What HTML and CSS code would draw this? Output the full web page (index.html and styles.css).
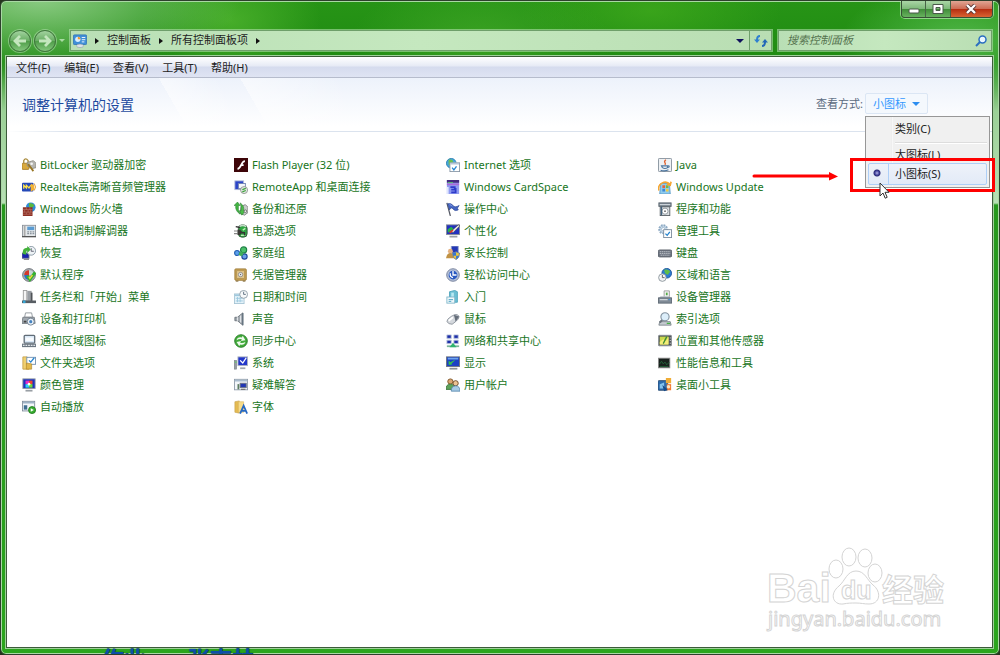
FILE: index.html
```html
<!DOCTYPE html>
<html lang="zh-CN">
<head>
    <meta charset="UTF-8">
    <meta name="viewport" content="width=device-width, initial-scale=1.0">
    <title>所有控制面板项</title>
    <link rel="stylesheet" href="styles.css">
</head>
<body>
    <div class="window">
        <!-- 标题栏 -->
        <header class="chrome">
            <div class="window-buttons">
                <button class="win-btn" type="button" aria-label="最小化">
                    <svg width="12" height="10" viewBox="0 0 12 10"><rect x="1" y="5" width="10" height="4" rx="1" fill="#fff" stroke="#4a5a4a"/></svg>
                </button>
                <button class="win-btn" type="button" aria-label="最大化">
                    <svg width="12" height="10" viewBox="0 0 12 10"><path d="M1 .5h10v9H1zM4 3.5h4v3H4z" fill="#fff" fill-rule="evenodd" stroke="#4a5a4a"/></svg>
                </button>
                <button class="win-btn win-close" type="button" aria-label="关闭">
                    <svg width="12" height="10" viewBox="0 0 12 10"><path d="M2 1l8 8M10 1L2 9" stroke="#533" stroke-width="4"/><path d="M2 1l8 8M10 1L2 9" stroke="#fff" stroke-width="2.4"/></svg>
                </button>
            </div>
            <div class="nav-row">
                <div class="nav-buttons">
                    <button class="nav-btn" type="button" aria-label="后退">
                        <svg width="14" height="14" viewBox="0 0 14 14"><path d="M7 2L2 7l5 5M2.5 7H13" fill="none" stroke="#c4e6be" stroke-width="2.8"/></svg>
                    </button>
                    <button class="nav-btn" type="button" aria-label="前进">
                        <svg width="14" height="14" viewBox="0 0 14 14"><path d="M7 2l5 5-5 5M11.5 7H1" fill="none" stroke="#c4e6be" stroke-width="2.8"/></svg>
                    </button>
                    <span class="nav-arrow"></span>
                </div>
                <div class="address">
                    <svg class="icon" viewBox="0 0 16 16"><rect x=".5" y="1" width="15" height="11" rx="1" fill="#3f8fd8" stroke="#3577b8"/><circle cx="5.5" cy="6" r="3" fill="#d9edff"/><path d="M5.5 6V3a3 3 0 0 1 3 3z" fill="#f39a2a"/><path d="M10 4h4M10 6.5h4M10 9h3" stroke="#fff"/><ellipse cx="8" cy="13.5" rx="4" ry="2" fill="#dde3ea" stroke="#8796a5" stroke-width=".6"/></svg>
                    <span class="crumb-arrow"></span>
                    <a href="#">控制面板</a>
                    <span class="crumb-arrow"></span>
                    <a href="#">所有控制面板项</a>
                    <span class="crumb-arrow"></span>
                    <button class="address-drop" type="button" aria-label="历史记录"></button>
                    <button class="refresh" type="button" aria-label="刷新">
                        <svg width="14" height="12" viewBox="0 0 14 12"><path d="M6 1Q3 1 3 5" fill="none" stroke="#2f7fd0" stroke-width="2"/><path d="M0 4.5h6L3 8z" fill="#2f7fd0"/><path d="M8 11q3 0 3-4" fill="none" stroke="#2468b8" stroke-width="2"/><path d="M8 7.5h6L11 4z" fill="#2468b8"/></svg>
                    </button>
                </div>
                <div class="search">
                    <input type="text" placeholder="搜索控制面板" aria-label="搜索控制面板">
                    <svg width="12" height="12" viewBox="0 0 12 12"><circle cx="7.5" cy="4.5" r="3.5" fill="#e9f7ff" stroke="#2a6fc0" stroke-width="1.5"/><path d="M5 7L1 11" stroke="#2a6fc0" stroke-width="2"/></svg>
                </div>
            </div>
        </header>

        <div class="client">
            <nav class="menubar">
                <button type="button">文件(F)</button>
                <button type="button">编辑(E)</button>
                <button type="button">查看(V)</button>
                <button type="button">工具(T)</button>
                <button type="button">帮助(H)</button>
            </nav>

            <div class="heading">
                <h1>调整计算机的设置</h1>
                <span class="view-label" id="viewLabel">查看方式:</span>
                <div class="view">
                    <button class="view-btn" type="button" aria-describedby="viewLabel">小图标</button>
                    <div class="popup" role="menu">
                        <button type="button" role="menuitemradio" aria-checked="false">类别(C)</button>
                        <hr>
                        <button class="covered" type="button" role="menuitemradio" aria-checked="false">大图标(L)</button>
                        <button class="selected" type="button" role="menuitemradio" aria-checked="true">小图标(S)</button>
                    </div>
                    <svg class="mark-arrow" width="88" height="10" viewBox="0 0 88 10"><path d="M2 4h77" stroke="#f00" stroke-width="3" stroke-linecap="round"/><path d="M77 0l9 4.5-9 4z" fill="#f00"/></svg>
                    <div class="mark-box"></div>
                    <svg class="cursor" width="11" height="18" viewBox="0 0 11 18"><path d="M1 1v13l3-3 2.2 5.2 2-.9L6 10.300h4z" fill="#fff" stroke="#333"/></svg>
                </div>
            </div>

            <ul class="items">
                <li><a href="#"><svg class="icon" viewBox="0 0 16 16"><path d="M2 6V3q2-4 5 0v3" fill="none" stroke="#a98a3a" stroke-width="1.5"/><rect x="0" y="6" width="8" height="7" rx="1" fill="#d9a93d" stroke="#a57d2c"/><path d="M6 5l7-2 3 3v5l-4 1-6-3z" fill="#b5b5b0" stroke="#8d8a82"/><path d="M7 7l6 8" stroke="#977522" stroke-width="2"/><circle cx="11" cy="6.5" r="1.5" fill="#f5f5f5"/></svg>BitLocker 驱动器加密</a></li>
                <li><a href="#"><svg class="icon" viewBox="0 0 16 16"><rect width="16" height="16" fill="#3d0508"/><path d="M12.5 3.5C8 3.5 8.5 12 4 12.5M7.5 8H11" fill="none" stroke="#fff" stroke-width="2"/></svg>Flash Player (32 位)</a></li>
                <li><a href="#"><svg class="icon" viewBox="0 0 16 16"><circle cx="6" cy="6" r="5.5" fill="#46a6dc" stroke="#2a7fb0"/><path d="M3 2q5-1 5 2T3 8z" fill="#6cc04c"/><rect x="4.5" y="5.5" width="11" height="10" fill="#fff" stroke="#8796a5"/><path d="M5 6.5h10" stroke="#b7c6d8" stroke-width="2"/><path d="M7 11l2 2.5 3-4" fill="none" stroke="#2684cf" stroke-width="1.5"/></svg>Internet 选项</a></li>
                <li><a href="#"><svg class="icon" viewBox="0 0 16 16"><rect x=".5" y=".5" width="15" height="15" rx="1" fill="#eef1f4" stroke="#7b8794"/><path d="M9 2c-4 3 1 3-1 6" fill="none" stroke="#e2602c" stroke-width="1.5"/><path d="M4 9h7v2q-3 2-6 0zM3 14q5 1.5 9-.5M11 9q3-.5 1 2" fill="none" stroke="#4c76a0" stroke-width="1.3"/></svg>Java</a></li>

                <li><a href="#"><svg class="icon" viewBox="0 0 16 16"><rect y="3" width="13" height="10" rx="1" fill="#2549b8"/><path d="M2 10V6l3 3V6l3 3 2-3" fill="none" stroke="#ffe34a" stroke-width="1.5"/><path d="M10 4l4 2v5l-4 2z" fill="#f2b236"/><path d="M14 4q3 4 0 8" fill="none" stroke="#db9424"/></svg>Realtek高清晰音频管理器</a></li>
                <li><a href="#"><svg class="icon" viewBox="0 0 16 16"><rect x="1" y="1" width="10" height="10" fill="#2b45c8" stroke="#b5bdd8"/><rect x="5" y="4" width="8" height="6" fill="#f4f6fb" stroke="#6d7fae"/><circle cx="11.5" cy="11.5" r="4" fill="#e8ece8" stroke="#8a918a"/><path d="M9.5 11l4-1.5M13.5 12l-4 1.5" stroke="#3ba13b" stroke-width="1.4"/></svg>RemoteApp 和桌面连接</a></li>
                <li><a href="#"><svg class="icon" viewBox="0 0 16 16"><rect x="1" y="0" width="14" height="16" fill="#8f9bf0"/><path d="M1 0h14v3H1z" fill="#43297f"/><path d="M1 4h14v2H1z" fill="#a96bd8"/><path d="M2 3h6" stroke="#5ed06a"/><path d="M5 8h5v3h-4M6 14h5V9" fill="none" stroke="#2e3aca" stroke-width="2"/><path d="M1 8h2v8H1z" fill="#dfe5ff"/></svg>Windows CardSpace</a></li>
                <li><a href="#"><svg class="icon" viewBox="0 0 16 16"><path d="M3 4h10l1 12H2z" fill="#8ecbee" stroke="#5a9cc8"/><path d="M5 6h3v3H5z" fill="#e8633a"/><path d="M9 6h3v3H9z" fill="#72b944"/><path d="M5 10h3v3H5z" fill="#3f86d0"/><path d="M9 10h3v3H9z" fill="#f4ca3f"/><path d="M1 12C-1 5 8-1 14 5l1-3M15 2l-1 4-4-1" fill="none" stroke="#f4a632" stroke-width="1.8"/></svg>Windows Update</a></li>

                <li><a href="#"><svg class="icon" viewBox="0 0 16 16"><circle cx="10" cy="6" r="5.5" fill="#2f8bd8"/><path d="M8 1q5 0 6 3l-3 3-3-2z" fill="#5bb83f"/><path d="M1 6h11v10H1z" fill="#8e2f24"/><path d="M1 8.5h11M1 11.5h11M1 14h11M5 6v3M9 6v3M3 9v3M7 9v3M10 9v3M5 12v2M9 12v2" stroke="#c08578" stroke-width=".6"/></svg>Windows 防火墙</a></li>
                <li><a href="#"><svg class="icon" viewBox="0 0 16 16"><path d="M8 5l5-2 3 3v6l-4 3-5-2z" fill="#c9cccb" stroke="#7b7f7e"/><path d="M0 4l4-4 3 4H5q-1 5 2 10Q1 10 2 4z" fill="#43b543" stroke="#1e7a28" stroke-width=".6"/><path d="M7 1q5 3 4 9h2l-4 5-3-5h2q1-4-1-9z" fill="#4dbd4a" stroke="#1e7a28" stroke-width=".6"/><circle cx="13" cy="10.5" r="1.5" fill="#eee" stroke="#666"/></svg>备份和还原</a></li>
                <li><a href="#"><svg class="icon" viewBox="0 0 16 16"><path d="M1 1l4 15" stroke="#565a66" stroke-width="1.4"/><path d="M2 2q4-1 6 2t7 0l-2 3 1 2q-4 2-6-1T4 9z" fill="#4566c4" stroke="#2f4996" stroke-width=".8"/><path d="M4 3q2 0 3 2" stroke="#8aa3ea" fill="none"/></svg>操作中心</a></li>
                <li><a href="#"><svg class="icon" viewBox="0 0 16 16"><rect x="1" y="1" width="14" height="4" fill="#7a858f" stroke="#59646f"/><path d="M2 3h12" stroke="#e5ebf0"/><rect x="2.5" y="5.5" width="11" height="10" fill="#dbe0e3" stroke="#555c62"/><circle cx="8" cy="10.5" r="3.5" fill="#fff" stroke="#8b9399"/><circle cx="8" cy="10.5" r="1" fill="#666"/><path d="M4 5v10" stroke="#41627e" stroke-width="1.5"/></svg>程序和功能</a></li>

                <li><a href="#"><svg class="icon" viewBox="0 0 16 16"><rect x=".5" y="1.5" width="15" height="13" fill="#e4e8eb" stroke="#8a9199"/><path d="M3 2v12" stroke="#aaa" stroke-width="2"/><rect x="6" y="3" width="8" height="4" fill="#5a9bd2"/><path d="M6 9h2M9 9h2M12 9h2M6 11h2M9 11h2M12 11h2" stroke="#8a949e" stroke-width="1.2"/><path d="M0 14.5h16" stroke="#555" stroke-width="1.5"/></svg>电话和调制解调器</a></li>
                <li><a href="#"><svg class="icon" viewBox="0 0 16 16"><rect x="5" y="1" width="10" height="14" rx="4" fill="#30a543" stroke="#34523a"/><path d="M6 3q4-3 8 0" stroke="#c4dcc8" stroke-width="2" fill="none"/><path d="M10 7l3-2M8 13h5" stroke="#bdf0b8" stroke-width="1.5"/><path d="M0 8h4M0 11h4" stroke="#888" stroke-width="1.3"/><path d="M4 6.5h3l3 3-3 3H4z" fill="#3a3a36"/><path d="M9 10h3v3M2 3l5 1" fill="none" stroke="#333" stroke-width="1.5"/></svg>电源选项</a></li>
                <li><a href="#"><svg class="icon" viewBox="0 0 16 16"><rect x=".5" y="1" width="15" height="11" fill="#2231c0" stroke="#858c95"/><path d="M2 10V6l4-3 3 3z" fill="#25b44c"/><path d="M5 9l9-8 2 1-8 8z" fill="#e9e9e9" stroke="#333" stroke-width=".6"/><path d="M4 10l4-3" stroke="#d93c2a" stroke-width="2"/><path d="M4 14.5h9" stroke="#9aa0a6" stroke-width="2"/></svg>个性化</a></li>
                <li><a href="#"><svg class="icon" viewBox="0 0 16 16"><circle cx="6" cy="6" r="4.5" fill="#cfdfed" stroke="#8fabc4" stroke-width="2.4" stroke-dasharray="2 1"/><circle cx="6" cy="6" r="2" fill="#fff" stroke="#9cb6cc"/><rect x="6.5" y="6.5" width="9" height="9" fill="#fff" stroke="#79899b"/><path d="M8.5 11l2 2 3-4" fill="none" stroke="#2684cf" stroke-width="1.5"/></svg>管理工具</a></li>

                <li><a href="#"><svg class="icon" viewBox="0 0 16 16"><rect x="0" y="8" width="8" height="6" fill="#1822b0" stroke="#6a7280"/><path d="M2 15.5h6" stroke="#777"/><circle cx="10.5" cy="5.5" r="5" fill="#eef3f6" stroke="#8493a0"/><path d="M10.5 2.5v3.5h3" stroke="#556" fill="none"/><path d="M1 9Q0 2 6 2V0l4 4-4 4V5Q4 5 5 10z" fill="#43b13b"/></svg>恢复</a></li>
                <li><a href="#"><svg class="icon" viewBox="0 0 16 16"><circle cx="3.5" cy="8" r="2.8" fill="#5a9fec" stroke="#235eb0" stroke-width="1.3"/><circle cx="12" cy="12" r="3" fill="#6a9fe8" stroke="#1f479b" stroke-width="1.3"/><circle cx="11" cy="4.5" r="3.5" fill="#4cc06a" stroke="#1e8246" stroke-width="1.3"/><circle cx="8" cy="9" r="2.5" fill="#40ad5a"/></svg>家庭组</a></li>
                <li><a href="#"><svg class="icon" viewBox="0 0 16 16"><rect x="6" y="0" width="8" height="8" fill="#2438b5" stroke="#9ba9cc"/><circle cx="5" cy="6" r="2.8" fill="#e5b283"/><path d="M0 14q1-6 5-6t5 6z" fill="#c19245"/><path d="M11.5 6.5q2 1.5 4 1.5 0 6-4 7.5-4-1.5-4-7.5 2 0 4-1.5z" fill="#f0c83b" stroke="#5c79ad"/><path d="M11.5 7v4H8V8zM11.5 11H15q-1 3-3.5 4z" fill="#3a78cf"/></svg>家长控制</a></li>
                <li><a href="#"><svg class="icon" viewBox="0 0 16 16"><rect x="0" y="4.5" width="16" height="8" rx="2" fill="#6d7480" stroke="#5b626c"/><path d="M2 6.5h12M2 8.5h12M3 10.5h10" stroke="#c5c9cf" stroke-dasharray="1.5 .7"/></svg>键盘</a></li>

                <li><a href="#"><svg class="icon" viewBox="0 0 16 16"><circle cx="8" cy="8" r="7.3" fill="#a9afb4" stroke="#686e74"/><path d="M8 8V2.5A5.5 5.5 0 0 0 2.5 8z" fill="#d5382a"/><path d="M8 8H2.5A5.5 5.5 0 0 0 8 13.5z" fill="#2d69c8"/><path d="M8 8V2.5A5.5 5.5 0 0 1 13.5 8z" fill="#c8d5d8"/><path d="M6 9l3 4 6-8" fill="none" stroke="#34b22f" stroke-width="3.5"/><path d="M8 10l1 2 3-4" fill="none" stroke="#f1d83d" stroke-width="1.5"/></svg>默认程序</a></li>
                <li><a href="#"><svg class="icon" viewBox="0 0 16 16"><rect x="1" y="1" width="13" height="13" rx="1" fill="#c8a355" stroke="#9c7832"/><rect x="3" y="3" width="9" height="9" fill="#dec48a" stroke="#b59655"/><circle cx="7.5" cy="7.5" r="2.5" fill="#eee" stroke="#8c8c8c"/><circle cx="7.5" cy="7.5" r=".8" fill="#666"/><path d="M2 15h3M10 15h3" stroke="#725621"/></svg>凭据管理器</a></li>
                <li><a href="#"><svg class="icon" viewBox="0 0 16 16"><circle cx="8" cy="8" r="7.2" fill="#b4c0d8" stroke="#727e98"/><circle cx="8" cy="8" r="5" fill="#2858c0"/><path d="M8 3.5V8h4M5 6q-1 4 3 5" fill="none" stroke="#fff" stroke-width="1.5"/></svg>轻松访问中心</a></li>
                <li><a href="#"><svg class="icon" viewBox="0 0 16 16"><circle cx="10" cy="6" r="5.5" fill="#2c7bd2" stroke="#1b559a"/><path d="M7 2q5-1 7 2l-3 4-3-2z" fill="#61bd47"/><circle cx="5" cy="11" r="4.3" fill="#f2f4f5" stroke="#8a939a"/><path d="M5 8v3h2.5" fill="none" stroke="#555"/></svg>区域和语言</a></li>

                <li><a href="#"><svg class="icon" viewBox="0 0 16 16"><rect x="1.5" y=".5" width="4" height="12" fill="#f4f4f4" stroke="#999"/><rect x="6" y="1" width="5" height="12" fill="#9a9fa4"/><path d="M11 3v10" stroke="#4f5357" stroke-width="2"/><path d="M0 13.5h16" stroke="#575d63" stroke-width="3"/><path d="M1 12h3v3H1z" fill="#36a5d4"/></svg>任务栏和「开始」菜单</a></li>
                <li><a href="#"><svg class="icon" viewBox="0 0 16 16"><rect x=".5" y="4.5" width="11" height="11" fill="#e5f3fa" stroke="#a5c4d4"/><path d="M1 6h9" stroke="#9fc8dd" stroke-width="2"/><path d="M2 9.5h8M2 12.5h8M4 8v6M7 8v6" stroke="#9bc8de"/><circle cx="11" cy="5" r="4.5" fill="#f7f9fa" stroke="#8b9aa5"/><path d="M11 2v3h2.5" fill="none" stroke="#567"/></svg>日期和时间</a></li>
                <li><a href="#"><svg class="icon" viewBox="0 0 16 16"><path d="M4 2l6-1.5 3 1.5v12H4z" fill="#6cbfd4" stroke="#4ea5bd"/><path d="M6 3h3v6H6z" fill="#b7e8f2"/><rect x="1" y="8" width="9" height="7" fill="#eff8fb" stroke="#7fb5c8"/><path d="M3 11h5M3 13h3" stroke="#3f9bc0"/></svg>入门</a></li>
                <li><a href="#"><svg class="icon" viewBox="0 0 16 16"><path d="M7 1h6v8H7z" fill="#f2f2f2" stroke="#999"/><path d="M9 3h2v3H9z" fill="#53aa45"/><path d="M3 7h10l3 3H0z" fill="#b8c0c8"/><rect x=".5" y="9" width="15" height="6" fill="#808b96" stroke="#5e6974"/><path d="M2 11h9" stroke="#cfd4d9" stroke-width="1.5"/><path d="M12 11h2" stroke="#39e"/></svg>设备管理器</a></li>

                <li><a href="#"><svg class="icon" viewBox="0 0 16 16"><path d="M4 1h7l1 5H3z" fill="#fff" stroke="#8b9299"/><path d="M1 6h13l1 7H0z" fill="#a2a9b0" stroke="#737a81"/><circle cx="10" cy="11" r="4" fill="#ebf2f8" stroke="#6e7e8e"/><circle cx="10" cy="11" r="1.8" fill="#4683c0"/><path d="M2 11h3" stroke="#444" stroke-width="2"/></svg>设备和打印机</a></li>
                <li><a href="#"><svg class="icon" viewBox="0 0 16 16"><path d="M1 6h3l6-5v14l-6-5H1z" fill="#9aa1a8" stroke="#6b737b"/><path d="M4 6v4M7.5 4v8" stroke="#dfe3e7" stroke-width="1.5"/><path d="M10 1v14" stroke="#657380" stroke-width="1.5"/></svg>声音</a></li>
                <li><a href="#"><svg class="icon" viewBox="0 0 16 16"><path d="M1 11q0-3 5-6l4-2q3-1 5 2 0 3-4 6l-4 3q-4 0-6-3z" fill="#d4d8dd" stroke="#8a919a"/><path d="M9 3l6 2-4 6-1-4z" fill="#656e7a"/><path d="M3 10l5-4" stroke="#fff" stroke-width="2"/></svg>鼠标</a></li>
                <li><a href="#"><svg class="icon" viewBox="0 0 16 16"><path d="M2 11l-1 4h14l-1-4z" fill="#c5cbd0" stroke="#7a838b"/><path d="M10 13h4" stroke="#48b048" stroke-width="1.5"/><path d="M6 8l-4 4" stroke="#6b747c" stroke-width="2.5"/><circle cx="8" cy="5.5" r="4.7" fill="#dceefa" stroke="#8493a0" stroke-width="1.3"/></svg>索引选项</a></li>

                <li><a href="#"><svg class="icon" viewBox="0 0 16 16"><rect x="2.5" y="1.5" width="12" height="9" rx="1" fill="#d9e8f6" stroke="#626d78" stroke-width="1.5"/><path d="M4 4h9v4H4z" fill="#f8fbfe"/><rect x="0" y="11" width="16" height="4" fill="#6c7681"/><path d="M1 13h14" stroke="#e3e8ec" stroke-width="1.5" stroke-dasharray="2 1"/></svg>通知区域图标</a></li>
                <li><a href="#"><svg class="icon" viewBox="0 0 16 16"><circle cx="8" cy="8" r="7.2" fill="#43ab3c" stroke="#237a23"/><path d="M3 7q1-4 6-3l1-2 3 5-5 1 1-2Q6 5 3 7zM13 9q-1 4-6 3l-1 2-3-5 5-1-1 2q3 1 6-1z" fill="#f0faee"/></svg>同步中心</a></li>
                <li><a href="#"><svg class="icon" viewBox="0 0 16 16"><path d="M1 1h5v4H1zM9 1h5v4H9zM1 7h5v4H1zM9 7h5v4H9z" fill="#1d2fa8" stroke="#c2cbe0"/><path d="M1 14h14" stroke="#7ab598" stroke-width="2"/><path d="M4 15l4-5 4 5z" fill="#2eb36e"/></svg>网络和共享中心</a></li>
                <li><a href="#"><svg class="icon" viewBox="0 0 16 16"><rect x=".5" y="1.5" width="15" height="12" rx="1" fill="#50565c" stroke="#8b9196"/><rect x="2" y="3" width="10" height="9" fill="#c9d84c"/><path d="M2 9l4-3 3 2 3-5v9H2z" fill="#f3ed77"/><path d="M6 11l4-8" stroke="#3c8b32" stroke-width="1.5"/><path d="M14 4v1M14 7v1M14 10v1" stroke="#fff"/></svg>位置和其他传感器</a></li>

                <li><a href="#"><svg class="icon" viewBox="0 0 16 16"><path d="M1 1h5l2 2v12H1z" fill="#f0cf70" stroke="#c7a04a"/><rect x="5.5" y="1.5" width="10" height="8" fill="#fff" stroke="#6c8cae"/><path d="M8 5l2 2 4-5" fill="none" stroke="#2684cf" stroke-width="1.5"/><path d="M5 8l6 1v6H5z" fill="#e1b74b" stroke="#ac8224" stroke-width=".7"/></svg>文件夹选项</a></li>
                <li><a href="#"><svg class="icon" viewBox="0 0 16 16"><rect x="0" y="5" width="3" height="10" fill="#969da3" stroke="#7e858b" stroke-width=".7"/><path d="M1 7h2" stroke="#5d5"/><rect x="4.5" y="1" width="11" height="10" fill="#2337ca" stroke="#b1b8c0"/><path d="M7 5l3 3 4-6" fill="none" stroke="#fff" stroke-width="1.5"/><path d="M7 14h6" stroke="#9fa6ac" stroke-width="2"/></svg>系统</a></li>
                <li><a href="#"><svg class="icon" viewBox="0 0 16 16"><rect x=".5" y="1" width="15" height="11" fill="#1b41c4" stroke="#6d747c"/><path d="M2 3h12" stroke="#6fa5ef" stroke-width="2"/><path d="M3 10V5l2 2 6-3-5 5 1 1z" fill="#35c14c"/><path d="M4 14.5h9" stroke="#8b9298" stroke-width="2"/></svg>显示</a></li>
                <li><a href="#"><svg class="icon" viewBox="0 0 16 16"><rect x=".5" y="2.5" width="13" height="11" fill="#18201c" stroke="#888"/><path d="M2 9l2-3 2 3 2-2 2 3 3-3" fill="none" stroke="#23653a"/><path d="M2 12h10" stroke="#1f5c35"/></svg>性能信息和工具</a></li>

                <li><a href="#"><svg class="icon" viewBox="0 0 16 16"><rect x="1" y="1" width="14" height="11" fill="#1c32c0" stroke="#9198a0"/><path d="M4 3h4v4H4z" fill="#e62ec6"/><path d="M8 3h4v4H8z" fill="#f1462c"/><path d="M4 7h4v4H4z" fill="#2fd3f0"/><path d="M8 7h4v4H8z" fill="#6fdb36"/><circle cx="8" cy="7" r="1.5" fill="#fff"/><path d="M4 14.5h8" stroke="#999fa5" stroke-width="2"/></svg>颜色管理</a></li>
                <li><a href="#"><svg class="icon" viewBox="0 0 16 16"><rect x=".5" y="1.5" width="15" height="12" fill="#f3f6fa" stroke="#8d99a8"/><path d="M1 3h14" stroke="#a9bccf" stroke-width="2"/><rect x="7" y="6" width="7" height="5" fill="#2136b4" stroke="#6e7682"/><rect x="4" y="7" width="2" height="6" fill="#5d7d62"/><path d="M8 13h5" stroke="#777" stroke-width="1.5"/></svg>疑难解答</a></li>
                <li><a href="#"><svg class="icon" viewBox="0 0 16 16"><circle cx="5" cy="4" r="3" fill="#d9a672" stroke="#7a5020"/><path d="M0 13q0-6 5-6t5 6z" fill="#5ea35b" stroke="#39733a"/><circle cx="11" cy="6" r="3" fill="#ecc393" stroke="#684421"/><path d="M6 15q0-6 5-6t5 6z" fill="#a6cbe6" stroke="#5b8bb0"/></svg>用户帐户</a></li>
                <li><a href="#"><svg class="icon" viewBox="0 0 16 16"><rect x="0" y="3" width="11" height="11" rx="1" fill="#2d6cae" stroke="#27486e"/><path d="M2 12V7l5-2v7z" fill="#84c3ec"/><rect x="9" y="0" width="6" height="6" fill="#f0ad36"/><rect x="10" y="7" width="5" height="7" fill="#f27b32"/><circle cx="12" cy="10" r="2" fill="#fae4c2"/><path d="M5 8l6 5-4 2z" fill="#174c8a"/></svg>桌面小工具</a></li>

                <li><a href="#"><svg class="icon" viewBox="0 0 16 16"><rect x=".5" y="1.5" width="14" height="11" fill="#f3f6fa" stroke="#7d8b9a"/><path d="M1 3h13" stroke="#9fb3c6" stroke-width="2"/><path d="M2 6h4v5H2z" fill="#416f93"/><circle cx="11.5" cy="11.5" r="4" fill="#37ae30" stroke="#1f7a1d"/><path d="M10 9.5v4l3.5-2z" fill="#fff"/></svg>自动播放</a></li>
                <li><a href="#"><svg class="icon" viewBox="0 0 16 16"><path d="M1 2l5-1v14l-5-1z" fill="#e4bb52" stroke="#c7a04a" stroke-width=".7"/><path d="M5 2h6v12H5z" fill="#f7dc8a" stroke="#d9b560" stroke-width=".7"/><path d="M7 15.5l4-9 4 9M9 12.5h4.5" fill="none" stroke="#2769c4" stroke-width="2"/></svg>字体</a></li>
            </ul>

            <!-- 水印 -->
            <svg class="watermark" width="184" height="92" viewBox="0 0 184 92">
                <g>
                    <ellipse cx="72" cy="25" rx="7" ry="9"/>
                    <ellipse cx="85" cy="13" rx="7" ry="9"/>
                    <ellipse cx="101" cy="14" rx="7" ry="9"/>
                    <ellipse cx="111" cy="29" rx="7" ry="9"/>
                    <path d="M92 27c-9 0-11 10-17 15-10 8-6 19 4 18 5-1 8-1 13-1s8 1 13 1c11 0 13-12 4-19-6-5-8-14-17-14z"/>
                </g>
                <text class="wm-brand" x="3" y="58">Bai</text>
                <text class="wm-du" x="77" y="55">du</text>
                <text class="wm-cn" x="118" y="57">经验</text>
                <text class="wm-url" x="4" y="82">jingyan.baidu.com</text>
            </svg>
        </div>

        <div class="below"><span>作业</span><span>张志林</span></div>
    </div>
</body>
</html>
```
FILE: styles.css
```css
* {
    box-sizing: border-box;
}

body {
    margin: 0;
    font-family: "Noto Sans", "Noto Sans CJK SC", sans-serif;
    font-size: 11px;
    line-height: 16px;
    color: #222;
    background: #26331f;
}

button,
input {
    font: inherit;
    color: inherit;
    margin: 0;
    padding: 0;
    border: 0;
    background: none;
}

a {
    color: inherit;
    text-decoration: none;
}

/* 窗口边框 */
.window {
    position: relative;
    display: flex;
    flex-direction: column;
    min-height: 100vh;
    padding: 0 6px 6px 5px;
    overflow: hidden;
    border: 1px solid #2d402c;
    border-radius: 6px;
    box-shadow: inset 0 0 0 1px #a9d8a4;
    background:
        radial-gradient(ellipse 200px 70px at 40px 0, rgba(160, 215, 155, 0.8), transparent),
        radial-gradient(ellipse 90px 60px at 230px 20px, rgba(85, 185, 50, 0.7), transparent),
        radial-gradient(ellipse 130px 60px at 480px 40px, rgba(75, 175, 45, 0.6), transparent),
        radial-gradient(ellipse 130px 50px at 650px 10px, rgba(70, 175, 30, 0.6), transparent),
        radial-gradient(ellipse 120px 60px at 960px 40px, rgba(100, 200, 95, 0.7), transparent),
        linear-gradient(#279416 0, #1f8b12 60px, #9ad096 110px, #b8dfb5 202px, #26981d 204px, #2ba51d 100%);
}

.chrome {
    height: 55px;
}

.window-buttons {
    display: flex;
    width: 92px;
    height: 17px;
    margin-left: auto;
    border: 1px solid #365035;
    border-top: 0;
    border-radius: 0 0 4px 4px;
    overflow: hidden;
    box-shadow: 0 0 0 1px rgba(200, 240, 195, 0.6);
}

.win-btn {
    display: flex;
    flex: 24;
    align-items: center;
    justify-content: center;
    border-right: 1px solid #486447;
    background: linear-gradient(#aad5a6, #7cb878 50%, #3f8c38 50%, #68b25f);
}

.win-close {
    flex: 42;
    border-right: 0;
    background: linear-gradient(#e0a594, #cd6a52 50%, #b52c10 50%, #d96332);
}

.nav-row {
    display: flex;
    align-items: center;
    height: 21px;
    margin-top: 12px;
}

.nav-buttons {
    display: flex;
    align-items: center;
    gap: 3px;
    width: 64px;
    padding-left: 3px;
}

.nav-btn {
    display: flex;
    align-items: center;
    justify-content: center;
    flex: none;
    width: 22px;
    height: 22px;
    border: 1px solid #41733f;
    border-radius: 50%;
    background: linear-gradient(#a2d29f, #66ad61 50%, #4c9b46 50%, #84c77d);
    box-shadow: 0 0 0 1px rgba(190, 230, 185, 0.5);
}

.nav-arrow {
    border: 3px solid transparent;
    border-top-color: #a9dba3;
    border-bottom: 0;
}

.address,
.search {
    display: flex;
    align-items: center;
    height: 21px;
    border: 1px solid #6f9f6b;
    background: linear-gradient(90deg, #b9dfb5, #c5e8bf 50%, #b9deb3);
    box-shadow: 0 0 0 1px rgba(200, 235, 195, 0.5);
}

.address {
    flex: 1;
    padding-left: 2px;
}

.address a {
    padding-bottom: 1px;
}

.icon {
    flex: none;
    width: 14px;
    height: 14px;
}

.crumb-arrow {
    margin: 0 8px;
    border: 3px solid transparent;
    border-left: 4px solid #111;
    border-right: 0;
}

.address-drop {
    width: 18px;
    height: 19px;
    margin-left: auto;
}

.address-drop::after {
    content: "";
    display: block;
    width: 0;
    margin: 0 auto;
    border: 4px solid transparent;
    border-top-color: #10105c;
    border-bottom: 0;
}

.refresh {
    display: flex;
    align-items: center;
    justify-content: center;
    width: 22px;
    height: 19px;
    border-left: 1px solid #6f9f6b;
}

.search {
    width: 214px;
    margin: 0 1px 0 6px;
    padding: 0 4px 0 8px;
}

.search input {
    flex: 1;
    min-width: 0;
    padding-bottom: 1px;
    outline: 0;
}

.search input::placeholder {
    color: #55734f;
    font-style: italic;
}

/* 窗口内容 */
.client {
    position: relative;
    flex: 1;
    background: #fff;
    border: 1px solid #3c5c3a;
    box-shadow: 0 0 0 1px #9fd09a;
}

.menubar {
    display: flex;
    gap: 14px;
    height: 21px;
    padding: 2px 0 0 9px;
    background: linear-gradient(#fff, #e6eaf5 45%, #d5dbee 50%, #dfe4f3);
    border-bottom: 1px solid #b6bccc;
}

.heading {
    position: relative;
    display: flex;
    align-items: flex-start;
    height: 54px;
    padding: 15px 64px 0 15px;
    background:
        linear-gradient(60deg, transparent 18%, rgba(255, 255, 255, 0.5) 18%, transparent 24%, transparent 26%, rgba(255, 255, 255, 0.5) 26%, transparent 36%),
        linear-gradient(#edf2fb, #fff 90%);
}

.heading::after {
    content: "";
    position: absolute;
    left: 0;
    right: 0;
    bottom: 0;
    height: 1px;
    background: linear-gradient(90deg, #fff, #dbe3ee 60px);
}

h1 {
    flex: 1;
    margin: 2px 0 0;
    font-size: 14px;
    line-height: 20px;
    font-weight: normal;
    color: #1d4a9f;
}

.view-label {
    margin: 3px 2px 0 0;
    color: #5a6a80;
}

.view {
    position: relative;
    z-index: 1;
}

.view-btn {
    display: flex;
    align-items: center;
    justify-content: center;
    gap: 6px;
    width: 63px;
    height: 21px;
    color: #3399ff;
    background: #f4f8fd;
    border: 1px solid #dbe6f4;
    border-radius: 2px;
}

.view-btn::after {
    content: "";
    border: 4px solid transparent;
    border-top-color: #2b8df0;
    border-bottom: 0;
}

.popup {
    position: absolute;
    top: 23px;
    left: 0;
    width: 125px;
    padding: 2px;
    background: linear-gradient(90deg, #f1f1f1 25px, #ddd 25px, #fff 26px, #f0f0f0 27px);
    border: 1px solid #979797;
}

.popup button {
    display: block;
    width: 100%;
    height: 20px;
    padding-left: 27px;
    text-align: left;
    line-height: 18px;
}

.popup hr {
    height: 2px;
    margin: 3px 0 1px 27px;
    border: 0;
    border-top: 1px solid #ddd;
    background: #fff;
}

.popup .covered {
    height: 18px;
    line-height: 20px;
    overflow: hidden;
}

.popup .selected {
    position: relative;
    height: 22px;
    border: 1px solid #aecff7;
    border-radius: 2px;
    background: linear-gradient(#eef2f9, #e2eaf7);
    padding-left: 26px;
}

.selected::before {
    content: "";
    position: absolute;
    top: 0;
    left: 0;
    width: 19px;
    height: 20px;
    border-right: 1px solid #aecff7;
    background: radial-gradient(circle at 8px 9px, #b5b5e8 0, #4848a0 2px, #2c2c78 3px, transparent 4px);
}

/* 红色标注 */
.mark-arrow {
    position: absolute;
    top: 79px;
    left: -113px;
}

.mark-box {
    position: absolute;
    top: 65px;
    left: -15px;
    width: 145px;
    height: 34px;
    border: 3px solid #f00;
}

.cursor {
    position: absolute;
    top: 89px;
    left: 14px;
}

.items {
    display: grid;
    grid-template-columns: repeat(4, 212px);
    grid-auto-rows: 22px;
    align-items: center;
    margin: 0;
    padding: 23px 0 80px 15px;
    list-style: none;
    color: #18751c;
}

.items a {
    display: inline-flex;
    align-items: center;
    gap: 4px;
}

.items a:hover {
    text-decoration: underline;
}

/* 水印 */
.watermark {
    position: absolute;
    right: 44px;
    bottom: 11px;
    fill: #fff;
    stroke: #d4d4d4;
    stroke-width: 1px;
    font-weight: bold;
}

.wm-brand {
    font-family: "Liberation Sans", sans-serif;
    font-size: 41px;
}

.wm-du {
    font-family: "Liberation Sans", sans-serif;
    font-size: 25px;
}

.wm-cn {
    font-size: 31px;
}

.wm-url {
    font-size: 20px;
    font-weight: normal;
}

/* 透过边框露出的文字 */
.below {
    position: absolute;
    left: 101px;
    bottom: -16px;
    display: flex;
    gap: 42px;
    font-size: 22px;
    line-height: 24px;
    font-weight: bold;
    color: #0d4fa8;
    text-shadow: 0 0 1px #012;
}
```
